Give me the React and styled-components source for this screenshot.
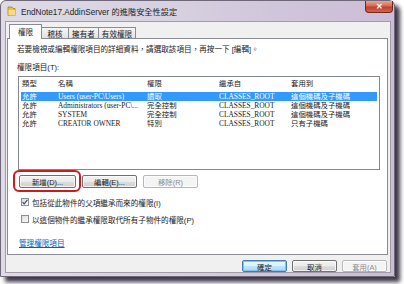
import React from 'react'
import styled, {createGlobalStyle} from 'styled-components';

const Global = createGlobalStyle`
    html, body {
        margin: 0;
        padding: 0;
        background: #ffffff;
    }
    body {
        width: 404px;
        height: 284px;
        overflow: hidden;
        font-family: "Liberation Sans", "Noto Sans CJK TC", sans-serif;
        color: #222;
    }
`
const Window = styled.div`
    width: 395px;
    height: 277px;
    box-sizing: border-box;
    display: flex;
    flex-direction: column;
    background: linear-gradient(90deg, #dedbe6 0%, #d6d0df 45%, #cfc4da 75%, #cbbdd6 100%);
    border: 1px solid #6e6878;
    border-radius: 6px 6px 0 0;
    box-shadow: 5px 5px 4px 0 rgba(30, 20, 40, 0.85);
`
const TitleBar = styled.div`
    height: 20px;
    display: flex;
    align-items: center;
    padding-left: 6px;
`
const TitleText = styled.span`
    font-size: 8.2px;
    color: #1e1e1e;
    margin-left: 5px;
    white-space: nowrap;
`
const CloseButton = styled.div`
    margin-left: auto;
    margin-right: 1px;
    align-self: flex-start;
    width: 28px;
    height: 12px;
    box-sizing: border-box;
    border: 1px solid #6a2a24;
    border-top: none;
    border-radius: 0 0 4px 4px;
    background: linear-gradient(180deg, #e9a594 0%, #d36a55 45%, #c0402b 55%, #d5624c 100%);
    color: #fff;
    font-size: 8px;
    font-weight: bold;
    display: flex;
    align-items: center;
    justify-content: center;
`
const Client = styled.div`
    flex: 1;
    margin: 0 3px 3px 4px;
    background: #f0f0f0;
    border: 1px solid #a19bab;
    display: flex;
    flex-direction: column;
    padding: 2px 2px 0 1px;
`
const Tabs = styled.div`
    display: flex;
    align-items: flex-end;
    padding-left: 2px;
    margin-bottom: -1px;
    position: relative;
    z-index: 1;
`
const Tab = styled.div`
    height: ${p => p.$active ? 15 : 12}px;
    width: ${p => p.$w}px;
    box-sizing: border-box;
    margin-left: ${p => p.$first ? 0 : -1}px;
    border: 1px solid #898c95;
    border-bottom: ${p => p.$active ? 'none' : '1px solid #898c95'};
    background: ${p => p.$active ? '#ffffff' : 'linear-gradient(180deg, #f6f6f6, #e2e2e2)'};
    font-size: 7.6px;
    display: flex;
    align-items: center;
    justify-content: center;
    padding-bottom: ${p => p.$active ? 2 : 0}px;
    position: relative;
    z-index: ${p => p.$active ? 2 : 1};
`
const Panel = styled.div`
    height: 217px;
    box-sizing: border-box;
    background: #ffffff;
    border: 1px solid #898c95;
    padding: 6px 7px 0 9px;
    display: flex;
    flex-direction: column;
    font-size: 7.6px;
`
const Line = styled.div`
    line-height: 10px;
    height: 10px;
    white-space: nowrap;
    margin-top: ${p => p.$mt || 0}px;
`
const ListBox = styled.div`
    margin: 3px 0 0 1px;
    width: 362px;
    height: 94px;
    box-sizing: border-box;
    border: 1px solid #828790;
    background: #fff;
    font-family: "Liberation Serif", "Noto Sans CJK TC", serif;
    font-size: 7.4px;
`
const Row = styled.div`
    display: grid;
    grid-template-columns: 36px 89px 72px 72px 1fr;
    margin: 0 2px 0 2px;
    padding-left: 1px;
    height: ${p => p.$head ? 14 : 9}px;
    line-height: ${p => p.$head ? 14 : 9}px;
    margin-bottom: ${p => p.$head ? 1 : 0}px;
    background: ${p => p.$selected ? '#3399ff' : 'transparent'};
    color: ${p => p.$selected ? '#ffffff' : '#222'};
    white-space: nowrap;
    span {
        overflow: hidden;
    }
`
const ButtonRow = styled.div`
    display: flex;
    gap: 6px;
    margin: 5px 0 0 2px;
`
const Button = styled.div`
    width: ${p => p.$w || 45}px;
    height: ${p => p.$h || 13}px;
    box-sizing: border-box;
    border: 1px solid ${p => p.$disabled ? '#b5b8bb' : p.$default ? '#3c7fb1' : '#707070'};
    border-radius: 2px;
    background: ${p => p.$disabled ? '#f4f4f4' : p.$default
        ? 'linear-gradient(180deg, #eaf6fd 0%, #d9f0fc 50%, #bee6fd 51%, #a7d9f5 100%)'
        : 'linear-gradient(180deg, #f2f2f2 0%, #ebebeb 50%, #dddddd 51%, #cfcfcf 100%)'};
    box-shadow: ${p => p.$default ? 'inset 0 0 0 1px #7ec4ea' : 'inset 0 0 0 1px rgba(255,255,255,0.7)'};
    color: ${p => p.$disabled ? '#8d8d8d' : '#222'};
    font-size: 7.4px;
    display: flex;
    align-items: center;
    justify-content: center;
    white-space: nowrap;
`
const Highlight = styled.div`
    position: relative;
    &::after {
        content: "";
        position: absolute;
        left: -6px;
        right: -5px;
        top: -5px;
        bottom: -4px;
        border: 2px solid #cc1b1f;
        border-radius: 6px;
        pointer-events: none;
    }
`
const CheckRow = styled.div`
    display: flex;
    align-items: center;
    gap: 3px;
    margin: ${p => p.$mt}px 0 0 4px;
    height: 10px;
    white-space: nowrap;
`
const Box = styled.div`
    width: 8px;
    height: 8px;
    box-sizing: border-box;
    border: 1px solid #8e8f8f;
    background: linear-gradient(135deg, #dcdcdc, #fbfbfb);
    display: flex;
    align-items: center;
    justify-content: center;
`
const Link = styled.a`
    color: #0b5fb5;
    text-decoration: underline;
    margin: 15px 0 0 2px;
    line-height: 10px;
    width: max-content;
`
const Footer = styled.div`
    display: flex;
    justify-content: flex-end;
    gap: 5px;
    padding: 5px 1px 0 0;
`

const entries = [
    ['允許', 'Users (user-PC\\Users)', '讀取', 'CLASSES_ROOT', '這個機碼及子機碼'],
    ['允許', 'Administrators (user-PC\\...', '完全控制', 'CLASSES_ROOT', '這個機碼及子機碼'],
    ['允許', 'SYSTEM', '完全控制', 'CLASSES_ROOT', '這個機碼及子機碼'],
    ['允許', 'CREATOR OWNER', '特別', 'CLASSES_ROOT', '只有子機碼'],
]

function App() {
    return (
        <>
            <Global />
            <Window>
                <TitleBar>
                    <svg width="9" height="10" viewBox="0 0 9 10">
                        <path d="M1 1h4l1 1.5h2v7H1z" fill="#e8c24a" stroke="#a7811c" strokeWidth="0.8" />
                        <path d="M1.5 4h6.5v5.5H1.5z" fill="#f7dc7a" />
                    </svg>
                    <TitleText>EndNote17.AddinServer 的進階安全性設定</TitleText>
                    <CloseButton>✕</CloseButton>
                </TitleBar>
                <Client>
                    <Tabs>
                        <Tab $active $first $w={33}>權限</Tab>
                        <Tab $w={28}>稽核</Tab>
                        <Tab $w={31}>擁有者</Tab>
                        <Tab $w={38}>有效權限</Tab>
                    </Tabs>
                    <Panel>
                        <Line>若要檢視或編輯權限項目的詳細資料，請選取該項目，再按一下 [編輯]。</Line>
                        <Line $mt={8}>權限項目(T):</Line>
                        <ListBox>
                            <Row $head>
                                <span>類型</span><span>名稱</span><span>權限</span><span>繼承自</span><span>套用到</span>
                            </Row>
                            {entries.map((e, i) => (
                                <Row key={i} $selected={i === 0}>
                                    {e.map((c, j) => <span key={j}>{c}</span>)}
                                </Row>
                            ))}
                        </ListBox>
                        <ButtonRow>
                            <Highlight>
                                <Button $w={57}>新增(D)...</Button>
                            </Highlight>
                            <Button $w={55}>編輯(E)...</Button>
                            <Button $w={55} $disabled>移除(R)</Button>
                        </ButtonRow>
                        <CheckRow $mt={9}>
                            <Box>
                                <svg width="6" height="6" viewBox="0 0 6 6">
                                    <path d="M0.6 3.1l1.6 1.7L5.4 0.9" fill="none" stroke="#2a4a86" strokeWidth="1.2" />
                                </svg>
                            </Box>
                            <span>包括從此物件的父項繼承而來的權限(I)</span>
                        </CheckRow>
                        <CheckRow $mt={7}>
                            <Box />
                            <span>以這個物件的繼承權限取代所有子物件的權限(P)</span>
                        </CheckRow>
                        <Link>管理權限項目</Link>
                    </Panel>
                    <Footer>
                        <Button $default $h={12}>確定</Button>
                        <Button $h={12}>取消</Button>
                        <Button $h={12} $disabled>套用(A)</Button>
                    </Footer>
                </Client>
            </Window>
        </>
    )
}

export default App
